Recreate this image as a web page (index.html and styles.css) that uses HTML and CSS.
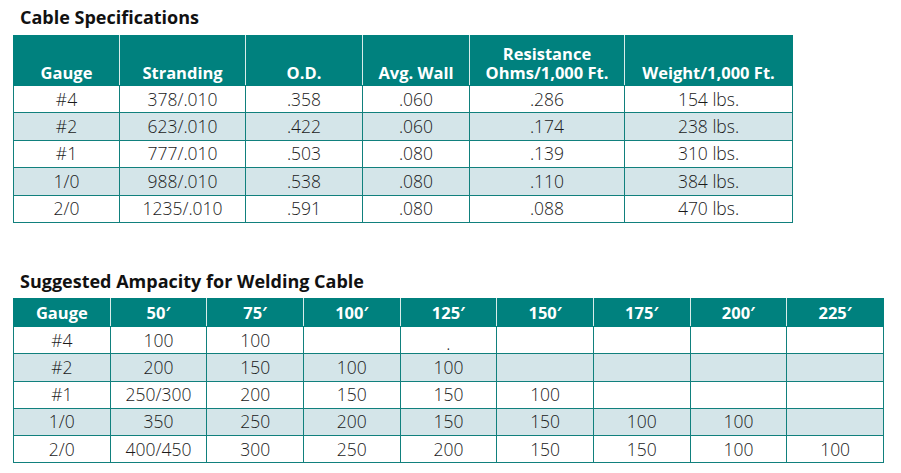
FILE: index.html
```html
<!DOCTYPE html>
<html>
<head>
<meta charset="utf-8">
<link rel="stylesheet" href="styles.css">
</head>
<body>
<div class="page">
  <h2 class="title">Cable Specifications</h2>
  <table class="spec">
    <colgroup>
      <col class="c1"><col class="c2"><col class="c3"><col class="c4"><col class="c5"><col class="c6">
    </colgroup>
    <thead>
      <tr><th>Gauge</th><th>Stranding</th><th>O.D.</th><th>Avg. Wall</th><th><span class="hl">Resistance</span><span class="hl">Ohms/1,000 Ft.</span></th><th>Weight/1,000 Ft.</th></tr>
    </thead>
    <tbody>
      <tr><td>#4</td><td>378/.010</td><td>.358</td><td>.060</td><td>.286</td><td>154 lbs.</td></tr>
      <tr class="alt"><td>#2</td><td>623/.010</td><td>.422</td><td>.060</td><td>.174</td><td>238 lbs.</td></tr>
      <tr><td>#1</td><td>777/.010</td><td>.503</td><td>.080</td><td>.139</td><td>310 lbs.</td></tr>
      <tr class="alt"><td>1/0</td><td>988/.010</td><td>.538</td><td>.080</td><td>.110</td><td>384 lbs.</td></tr>
      <tr><td>2/0</td><td>1235/.010</td><td>.591</td><td>.080</td><td>.088</td><td>470 lbs.</td></tr>
    </tbody>
  </table>

  <h2 class="title second">Suggested Ampacity for Welding Cable</h2>
  <table class="amp">
    <thead>
      <tr><th>Gauge</th><th>50′</th><th>75′</th><th>100′</th><th>125′</th><th>150′</th><th>175′</th><th>200′</th><th>225′</th></tr>
    </thead>
    <tbody>
      <tr><td>#4</td><td>100</td><td>100</td><td></td><td><span class="dot">.</span></td><td></td><td></td><td></td><td></td></tr>
      <tr class="alt"><td>#2</td><td>200</td><td>150</td><td>100</td><td>100</td><td></td><td></td><td></td><td></td></tr>
      <tr><td>#1</td><td>250/300</td><td>200</td><td>150</td><td>150</td><td>100</td><td></td><td></td><td></td></tr>
      <tr class="alt"><td>1/0</td><td>350</td><td>250</td><td>200</td><td>150</td><td>150</td><td>100</td><td>100</td><td></td></tr>
      <tr><td>2/0</td><td>400/450</td><td>300</td><td>250</td><td>200</td><td>150</td><td>150</td><td>100</td><td>100</td></tr>
    </tbody>
  </table>
</div>
</body>
</html>
```

FILE: styles.css
```css
html, body {
  margin: 0;
  padding: 0;
  background: #ffffff;
}

.page {
  padding: 0 0 0 13px;
  font-family: "Open Sans", "Noto Sans", sans-serif;
  color: #1a1a1a;
}

.title {
  margin: 0 0 6px 7px;
  padding-top: 5px;
  font-size: 18px;
  line-height: 24px;
  font-weight: 700;
  color: #111;
}

.title.second {
  margin-top: 41px;
  margin-bottom: 5px;
}

table {
  border-collapse: collapse;
  table-layout: fixed;
}

th {
  box-sizing: border-box;
  background: #00817e;
  color: #ffffff;
  font-weight: 700;
  font-size: 16.5px;
  line-height: 19px;
  text-align: center;
  padding: 0 2px 5px;
  border-left: 1px solid #d8ecea;
  border-right: 1px solid #d8ecea;
  border-top: 1px solid #00817e;
  border-bottom: 1px solid #00817e;
}

th:first-child {
  border-left-color: #00817e;
}

th:last-child {
  border-right-color: #00817e;
}

.hl {
  display: block;
}

td {
  border: 1px solid #11807d;
  text-align: center;
  font-size: 17.5px;
  font-weight: 300;
  line-height: 20px;
  padding: 2px 2px 3px;
  box-sizing: border-box;
}

tr.alt td {
  background: #d4e5e9;
}

.spec {
  width: 779px;
}

.spec th {
  height: 50px;
  vertical-align: bottom;
  padding-bottom: 3px;
}

.spec td {
  height: 27.4px;
}

.c1 { width: 106px; }
.c2 { width: 126px; }
.c3 { width: 117px; }
.c4 { width: 107px; }
.c5 { width: 155px; }
.c6 { width: 168px; }

.amp {
  width: 871px;
}

.amp th {
  height: 28px;
  vertical-align: middle;
  padding: 0 2px;
}

.amp td {
  height: 27.3px;
}

.dot {
  position: relative;
  top: 3px;
}
```
